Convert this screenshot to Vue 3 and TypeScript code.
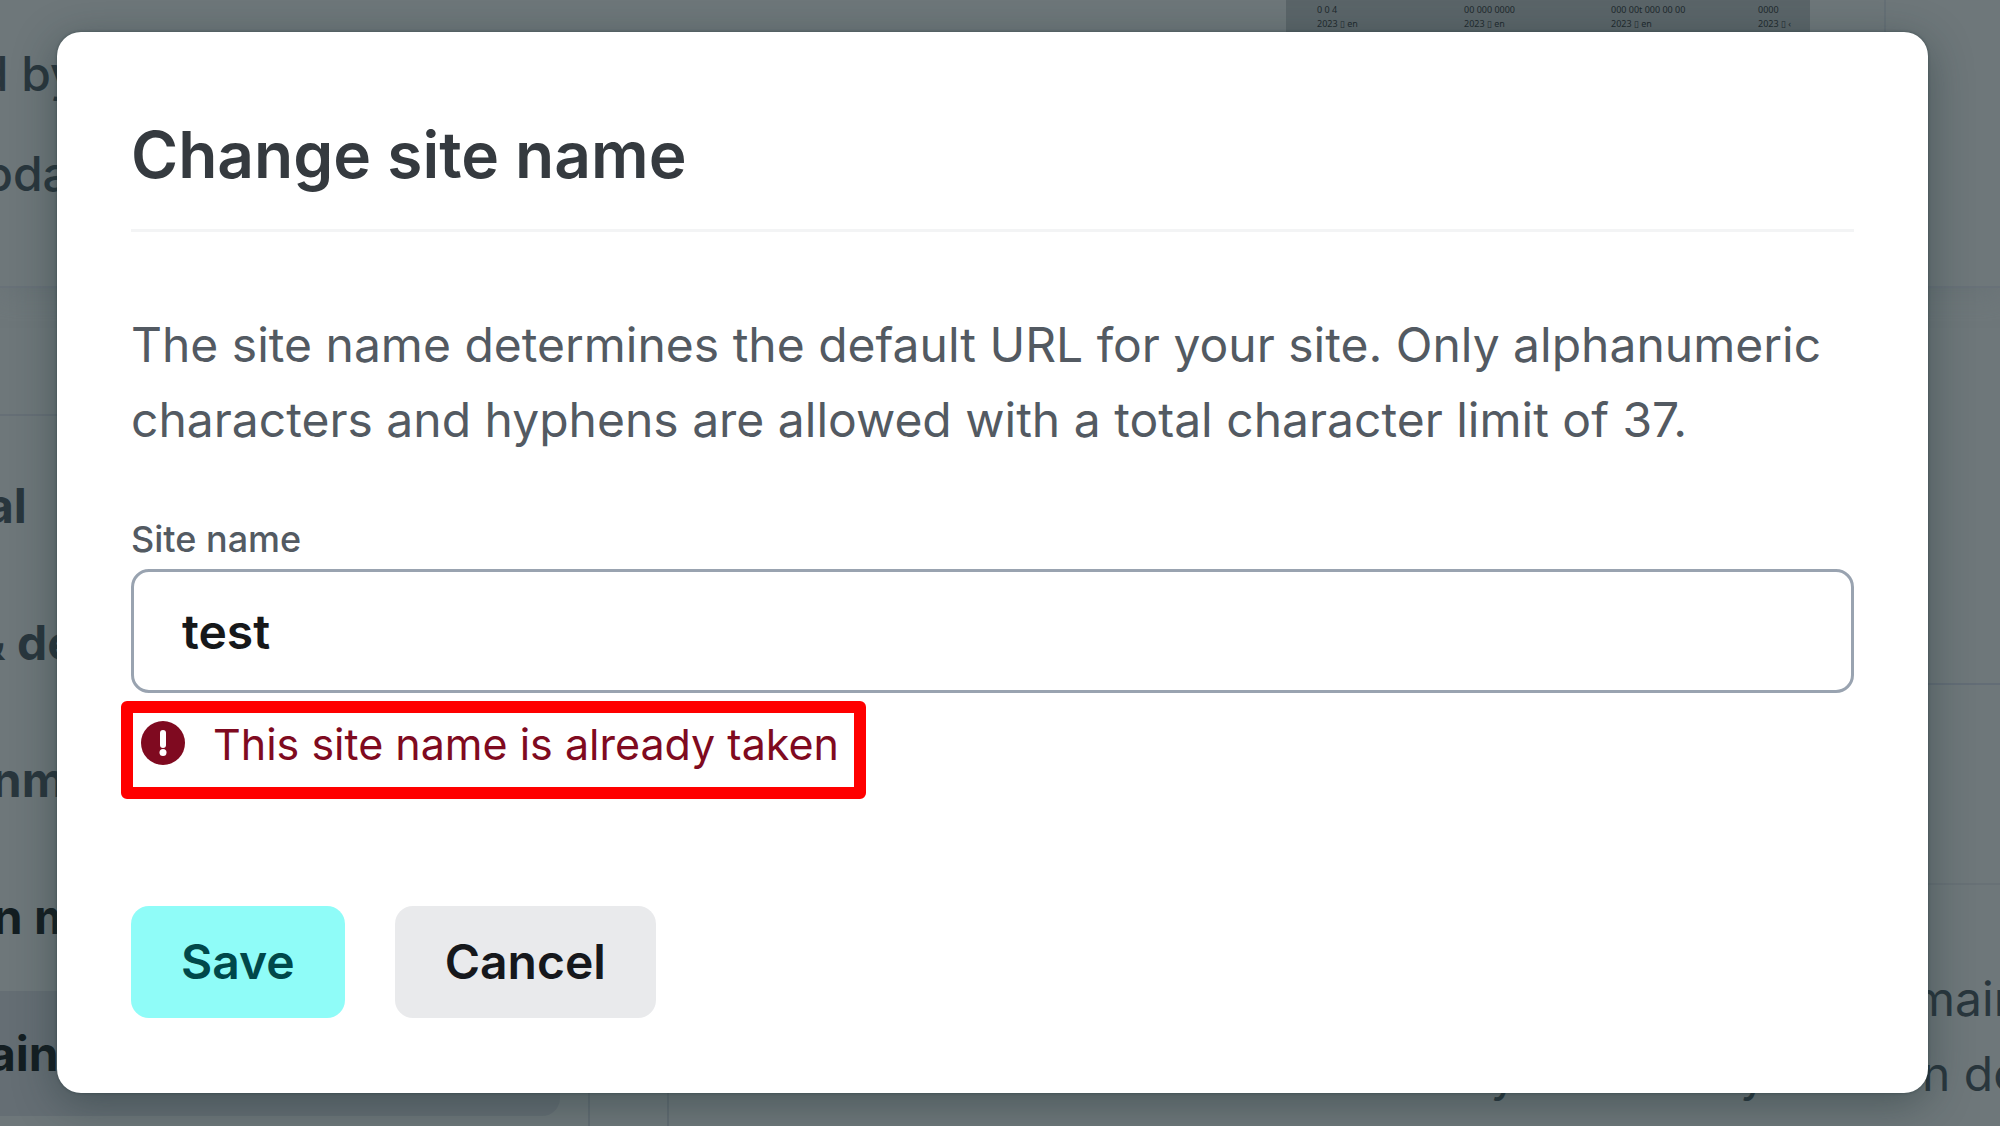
<script setup lang="ts">
import { ref } from 'vue'

interface NavItem {
  label: string
  tone: 'muted' | 'strong' | 'active'
}

const siteName = ref('test')

const navItems: NavItem[] = [
  { label: 'General', tone: 'muted' },
  { label: 'Build & deploy', tone: 'muted' },
  { label: 'Environment', tone: 'muted' },
  { label: 'Domain management', tone: 'strong' },
  { label: 'Domains', tone: 'active' },
]

const previewColumns: string[][] = [
  ['0 0 4', '2023 ▯ en'],
  ['00 000 0000', '2023 ▯ en'],
  ['000 00t 000 00 00', '2023 ▯ en'],
  ['0000', '2023 ▯ ‹'],
]
</script>

<template>
  <div class="screen">
    <div class="page" aria-hidden="true">
      <header class="summary">
        <div class="summary-card">
          <div class="summary-text">
            <p>Owned by</p>
            <p>Last update</p>
          </div>
          <div class="preview">
            <div v-for="(column, i) in previewColumns" :key="i" class="preview-column">
              <span v-for="line in column" :key="line">{{ line }}</span>
            </div>
          </div>
        </div>
      </header>
      <div class="body">
        <nav class="sidebar">
          <ul>
            <li v-for="item in navItems" :key="item.label" :class="item.tone">{{ item.label }}</li>
          </ul>
        </nav>
        <main class="content">
          <section class="block first"></section>
          <section class="block second"></section>
          <section class="block third">
            <p>Netlify subdomain</p>
            <p>you to use your own do</p>
          </section>
        </main>
      </div>
    </div>

    <div class="overlay">
      <form class="dialog" role="dialog" aria-labelledby="dialog-title" @submit.prevent>
        <h1 id="dialog-title">Change site name</h1>
        <p class="description">
          The site name determines the default URL for your site. Only alphanumeric characters and
          hyphens are allowed with a total character limit of 37.
        </p>
        <label for="site-name">Site name</label>
        <input id="site-name" v-model="siteName" type="text" aria-describedby="site-name-error" />
        <div id="site-name-error" class="error" role="alert">
          <svg viewBox="0 0 44 44" aria-hidden="true">
            <circle cx="22" cy="22" r="22" fill="#7f0a20" />
            <rect x="19" y="9" width="6" height="18" rx="3" fill="#fff" />
            <circle cx="22" cy="31.500" r="3.500" fill="#fff" />
          </svg>
          <span>This site name is already taken</span>
        </div>
        <div class="actions">
          <button class="save" type="submit">Save</button>
          <button class="cancel" type="button">Cancel</button>
        </div>
      </form>
    </div>
  </div>
</template>

<style>
body {
  margin: 0;
  background: #6e777a;
}
</style>

<style scoped>
.screen {
  position: relative;
  height: 100vh;
  overflow: hidden;
  background: #6e777a;
  color: #29363d;
  font-family: Inter, 'Liberation Sans', sans-serif;
  font-size: 48px;
}

p,
h1,
ul {
  margin: 0;
  padding: 0;
}

.page {
  display: flex;
  flex-direction: column;
  white-space: nowrap;
}

.summary {
  box-sizing: border-box;
  height: 288px;
  padding-right: 114px;
  border-bottom: 2px solid #687178;
  box-shadow: 0 4px 24px #687276;
}

.summary-card {
  display: flex;
  justify-content: space-between;
  box-sizing: border-box;
  height: 100%;
  padding-right: 74px;
  border-right: 2px solid #667076;
}

.summary-text {
  margin-left: -155px;
  padding-top: 24px;
  font-weight: 500;
  line-height: 100px;
}

.preview {
  display: flex;
  box-sizing: border-box;
  width: 524px;
  height: 240px;
  padding: 3px 0 0 31px;
  background: #5b6569;
  color: #20292d;
  font: 9px/14px 'Noto Sans', sans-serif;
}

.preview-column {
  display: flex;
  flex: 0 0 147px;
  flex-direction: column;
}

.preview-column:last-child {
  flex-basis: 50px;
}

.body {
  display: flex;
  height: 860px;
}

.sidebar {
  box-sizing: border-box;
  flex: 0 0 590px;
  padding-top: 126px;
  border-right: 2px solid #626c72;
}

.sidebar ul {
  border-top: 2px solid #666f76;
  padding-top: 27px;
  list-style: none;
}

.sidebar li {
  box-sizing: border-box;
  height: 125px;
  margin: 0 28px 12px 0;
  border-radius: 0 18px 18px 0;
  font-weight: 700;
  line-height: 125px;
  text-indent: -156px;
}

.sidebar .strong,
.sidebar .active {
  color: #141e22;
}

.sidebar .active {
  background: #656e74;
  text-indent: -120px;
}

.content {
  flex: 1;
  min-width: 0;
  margin-left: 77px;
  border-left: 2px solid #626c72;
}

.block {
  box-sizing: border-box;
}

.first {
  height: 397px;
  border-bottom: 2px solid #636d76;
}

.second {
  height: 200px;
  border-bottom: 2px solid #687176;
}

.third {
  margin-right: -22px;
  padding-top: 76px;
  line-height: 75px;
  text-align: right;
}

.overlay {
  position: absolute;
  inset: 0;
  padding: 32px 72px 32px 57px;
}

.dialog {
  display: flex;
  flex-direction: column;
  padding: 75px 74px;
  border-radius: 24px;
  background: #fff;
  box-shadow: 0 10px 44px rgba(28, 48, 52, 0.45), 0 0 3px rgba(28, 48, 52, 0.5);
}

h1 {
  padding: 8px 0 34px;
  border-bottom: 3px solid #f3f4f5;
  color: #353a3f;
  font-size: 64px;
  font-weight: 600;
  line-height: 80px;
}

.description {
  padding: 75px 0 60px;
  color: #535a62;
  line-height: 75px;
}

label {
  align-self: flex-start;
  margin-bottom: 8px;
  color: #535a62;
  font-size: 36px;
  font-weight: 500;
  line-height: 44px;
}

input {
  box-sizing: border-box;
  width: 100%;
  height: 124px;
  padding: 0 48px;
  border: 3px solid #99a3b0;
  border-radius: 18px;
  outline: none;
  background: #fff;
  color: #16181a;
  font: 600 48px/60px Inter, sans-serif;
}

.error {
  display: flex;
  gap: 28px;
  align-items: flex-start;
  align-self: flex-start;
  box-sizing: border-box;
  height: 98px;
  margin: 8px 0 107px -10px;
  padding: 8px 15px 0 8px;
  border: 12px solid #f00;
  border-radius: 6px;
  color: #7f0a20;
  font-size: 43px;
  line-height: 46px;
}

.error svg {
  width: 44px;
  height: 44px;
}

.actions {
  display: flex;
  gap: 50px;
}

button {
  height: 112px;
  padding: 0 50px;
  border: 0;
  border-radius: 18px;
  font: 600 48px/60px Inter, sans-serif;
}

.save {
  background: #8ffcf8;
  color: #00484a;
}

.cancel {
  background: #e9eaec;
  color: #16181c;
}
</style>
